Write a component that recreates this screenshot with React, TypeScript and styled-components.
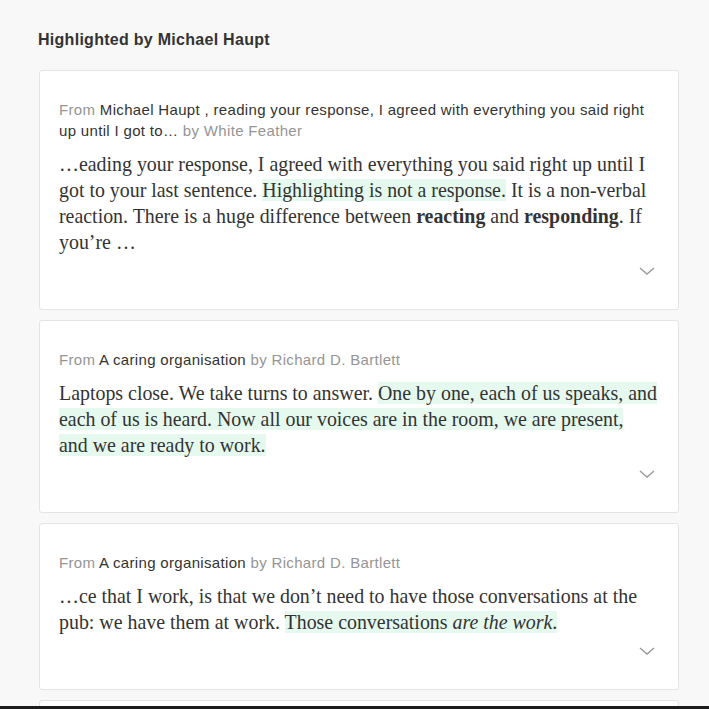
import React from "react";
import styled, { createGlobalStyle } from "styled-components";

const Global = createGlobalStyle`
  html, body { margin: 0; padding: 0; background: #f8f8f8; }
  body { font-family: "Liberation Sans", Arial, sans-serif; }
`;

const Page = styled.div`
  padding: 30px 30px 0 39px;
  width: 640px;
`;

const Title = styled.h2`
  margin: 0 0 20px -1px;
  font: bold 16px/20px "Liberation Sans", Arial, sans-serif;
  letter-spacing: 0.28px;
  color: #333;
`;

const List = styled.div`
  display: flex;
  flex-direction: column;
  gap: 10px;
`;

const Card = styled.div`
  background: #fff;
  border: 1px solid #e4e4e4;
  border-radius: 3px;
  padding: 28px 19px 28px 19px;
`;

const Meta = styled.div`
  font: 15px/21px "Liberation Sans", Arial, sans-serif;
  letter-spacing: 0.33px;
  color: #959595;
`;

const Strong = styled.span`
  color: #333;
`;

const Body = styled.p`
  margin: 10px 0 0;
  font: 19.9px/26px "Liberation Serif", "Times New Roman", serif;
  color: #333;
`;

const Mark = styled.span`
  background: #e6f9ef;
`;

const Footer = styled.div`
  display: flex;
  justify-content: flex-end;
  height: 20px;
  margin-top: 6px;
  padding-right: 2px;
`;

const Chevron = () => (
  <svg width="20" height="20" viewBox="0 0 20 20">
    <path d="M3 7 L10 13 L17 7" fill="none" stroke="#9a9a9a" strokeWidth="1.4" />
  </svg>
);

const Bottom = styled.div`
  position: fixed;
  left: 0;
  right: 0;
  bottom: 0;
  height: 3px;
  background: #1c1c1c;
`;

export default function App() {
  return (
    <>
      <Global />
      <Page>
        <Title>Highlighted by Michael Haupt</Title>
        <List>
          <Card>
            <Meta>
              From <Strong>Michael Haupt , reading your response, I agreed with everything you said right up until I got to…</Strong> by White Feather
            </Meta>
            <Body>
              …eading your response, I agreed with everything you said right up until I got to your last sentence. <Mark>Highlighting is not a response.</Mark> It is a non-verbal reaction. There is a huge difference between <b>reacting</b> and <b>responding</b>. If you’re …
            </Body>
            <Footer><Chevron /></Footer>
          </Card>
          <Card>
            <Meta>
              From <Strong>A caring organisation</Strong> by Richard D. Bartlett
            </Meta>
            <Body>
              Laptops close. We take turns to answer. <Mark>One by one, each of us speaks, and each of us is heard. Now all our voices are in the room, we are present,<br />and we are ready to work.</Mark>
            </Body>
            <Footer><Chevron /></Footer>
          </Card>
          <Card>
            <Meta>
              From <Strong>A caring organisation</Strong> by Richard D. Bartlett
            </Meta>
            <Body>
              …ce that I work, is that we don’t need to have those conversations at the pub: we have them at work. <Mark>Those conversations <i>are the work</i>.</Mark>
            </Body>
            <Footer><Chevron /></Footer>
          </Card>
          <Card>
            <Meta>
              From <Strong>A caring organisation</Strong> by Richard D. Bartlett
            </Meta>
            <Body>…</Body>
          </Card>
        </List>
      </Page>
      <Bottom />
    </>
  );
}
